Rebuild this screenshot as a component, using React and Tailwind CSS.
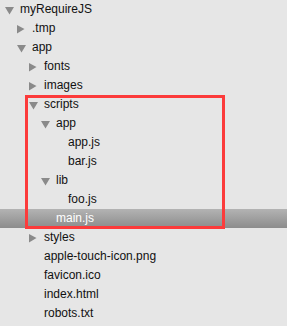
/**
 * App.jsx — file tree sidebar with a highlighted "scripts" folder.
 */

const indent = [
  'pl-[5px]',
  'pl-[17px]',
  'pl-[29px]',
  'pl-[41px]',
  'pl-[53px]',
]

const tree = [
  { name: 'myRequireJS', level: 0, open: true },
  { name: '.tmp', level: 1, open: false },
  { name: 'app', level: 1, open: true },
  { name: 'fonts', level: 2, open: false },
  { name: 'images', level: 2, open: false },
  { name: 'scripts', level: 2, open: true },
  { name: 'app', level: 3, open: true },
  { name: 'app.js', level: 4 },
  { name: 'bar.js', level: 4 },
  { name: 'lib', level: 3, open: true },
  { name: 'foo.js', level: 4 },
  { name: 'main.js', level: 3, selected: true },
  { name: 'styles', level: 2, open: false },
  { name: 'apple-touch-icon.png', level: 2 },
  { name: 'favicon.ico', level: 2 },
  { name: 'index.html', level: 2 },
  { name: 'robots.txt', level: 2 },
]

const Toggle = ({ open }) =>
  open ? (
    <svg width="10" height="19" viewBox="0 0 10 19" aria-hidden="true">
      <polygon points="0,7 9,7 4.5,14.5" fill="#8a8a8a" />
    </svg>
  ) : (
    <svg width="10" height="19" viewBox="0 0 10 19" aria-hidden="true">
      <polygon points="0,6 7.5,10 0,14.5" fill="#8a8a8a" />
    </svg>
  )

function Row({ item }) {
  const folder = item.open !== undefined
  return (
    <div
      className={`flex items-center h-[19px] ${indent[item.level]} ${
        item.selected
          ? 'bg-gradient-to-b from-[#b3b3b3] to-[#8c8c8c] text-white'
          : 'text-[#111]'
      }`}
    >
      <div className="w-[10px] h-[19px] shrink-0 mr-[5px]">
        {folder && <Toggle open={item.open} />}
      </div>
      <span className="leading-[19px] whitespace-nowrap">{item.name}</span>
    </div>
  )
}

export default function App() {
  return (
    <div
      className="relative w-[287px] h-[326px] overflow-hidden bg-[#e6e6e6] text-[12px]"
      style={{ fontFamily: '"Liberation Sans", Arial, sans-serif' }}
    >
      {tree.map((item, i) => (
        <Row key={i} item={item} />
      ))}

      {/* Annotation box round the scripts folder */}
      <div className="absolute left-[25px] top-[95px] w-[200px] h-[134px] border-[3px] border-[#fc3b3b] pointer-events-none" />
    </div>
  )
}
